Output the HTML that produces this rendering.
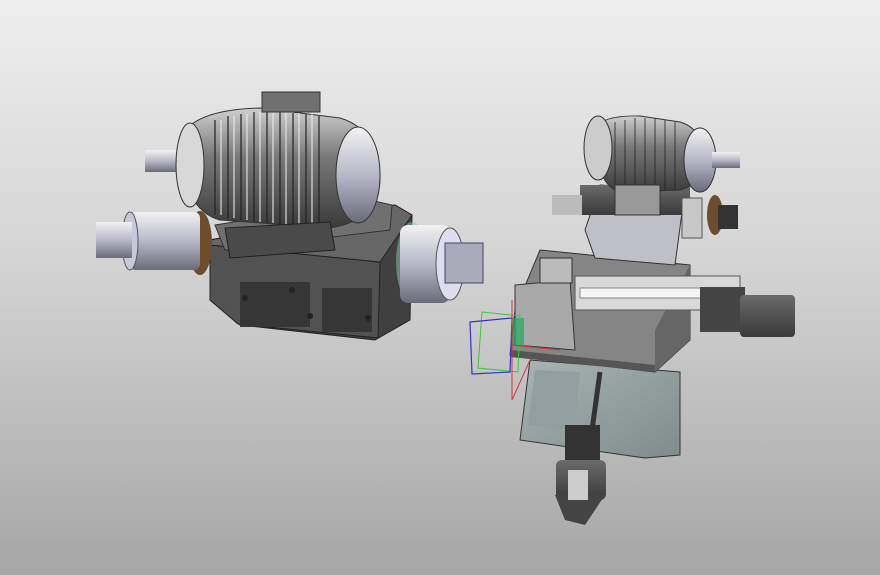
<!DOCTYPE html>
<html><head><meta charset="utf-8"><style>
html,body{margin:0;padding:0;width:880px;height:575px;overflow:hidden}
body{background:linear-gradient(#eeeeee 0%,#d4d4d4 45%,#a6a6a6 100%)}
svg{position:absolute;left:0;top:0}
</style></head><body>
<svg width="880" height="575" viewBox="0 0 880 575">
<defs>
<linearGradient id="mg" x1="0" y1="0" x2="0" y2="1"><stop offset="0" stop-color="#cfcfcf"/><stop offset=".4" stop-color="#7a7a7a"/><stop offset="1" stop-color="#3a3a3a"/></linearGradient>
<linearGradient id="cyl" x1="0" y1="0" x2="0" y2="1"><stop offset="0" stop-color="#f2f2f2"/><stop offset=".5" stop-color="#b8b8c8"/><stop offset="1" stop-color="#6a6a78"/></linearGradient>
<linearGradient id="dk" x1="0" y1="0" x2="0" y2="1"><stop offset="0" stop-color="#6a6a6a"/><stop offset="1" stop-color="#3a3a3a"/></linearGradient>
<linearGradient id="tb" x1="0" y1="0" x2="1" y2="1"><stop offset="0" stop-color="#a9b4b4"/><stop offset="1" stop-color="#7f8c8c"/></linearGradient>
</defs>
<!-- LEFT ASSEMBLY -->
<polygon points="210,240 395,205 412,215 410,320 375,340 240,325 210,300" fill="#404040" stroke="#222"/>
<polygon points="210,245 380,262 378,338 238,324 210,300" fill="#525252" stroke="#222"/>
<polygon points="210,240 395,205 412,215 380,262 210,245" fill="#666" stroke="#222"/>
<rect x="240" y="282" width="70" height="45" fill="#363636"/>
<rect x="322" y="288" width="50" height="44" fill="#363636"/>
<g fill="#222"><circle cx="245" cy="298" r="3"/><circle cx="292" cy="290" r="3"/><circle cx="310" cy="316" r="3"/><circle cx="368" cy="318" r="3"/></g>
<polygon points="215,225 370,200 392,205 390,230 225,250" fill="#707070" stroke="#333"/>
<ellipse cx="200" cy="243" rx="12" ry="32" fill="#6e4c2e"/>
<rect x="130" y="212" width="70" height="58" fill="url(#cyl)" rx="6"/>
<ellipse cx="130" cy="241" rx="8" ry="29" fill="#c8c8d8" stroke="#555"/>
<rect x="96" y="222" width="36" height="36" fill="url(#cyl)"/>
<rect x="145" y="150" width="45" height="22" fill="url(#cyl)"/>
<path d="M180,140 Q190,110 260,108 L340,118 Q380,130 380,180 Q378,220 330,228 L220,220 Q182,210 180,140Z" fill="url(#mg)" stroke="#333"/>
<g stroke="#222" stroke-width="1.5" opacity=".8">
<path d="M215,120 L215,215 M228,116 L228,218 M241,114 L241,220 M254,112 L254,222 M267,112 L267,223 M280,112 L280,224 M293,113 L293,225 M306,114 L306,226 M319,116 L319,226"/>
</g>
<g stroke="#eee" stroke-width="1.5" opacity=".7">
<path d="M221,120 L221,215 M234,116 L234,218 M247,114 L247,220 M260,112 L260,222 M273,112 L273,223 M286,112 L286,224 M299,113 L299,225 M312,114 L312,226"/>
</g>
<ellipse cx="190" cy="165" rx="14" ry="42" fill="#d8d8d8" stroke="#333"/>
<ellipse cx="358" cy="175" rx="22" ry="48" fill="url(#cyl)" stroke="#333"/>
<rect x="262" y="92" width="58" height="20" fill="#707070" stroke="#333"/>
<polygon points="225,228 330,222 335,250 230,258" fill="#4a4a4a" stroke="#222"/>
<ellipse cx="412" cy="262" rx="16" ry="40" fill="#8ca" opacity=".5"/>
<rect x="400" y="225" width="50" height="78" fill="url(#cyl)" rx="8"/>
<ellipse cx="450" cy="264" rx="14" ry="36" fill="#dde" stroke="#555"/>
<rect x="445" y="243" width="38" height="40" fill="#aab" stroke="#446"/>
<!-- RIGHT ASSEMBLY -->
<polygon points="520,440 530,360 680,372 680,455 645,458" fill="url(#tb)" stroke="#333"/>
<polygon points="535,370 580,372 575,430 528,425" fill="#90a0a0"/>
<line x1="600" y1="372" x2="590" y2="445" stroke="#333" stroke-width="5"/>
<polygon points="540,250 690,265 690,340 655,372 510,355 515,310" fill="#858585" stroke="#333"/>
<polygon points="510,350 655,365 655,372 510,357" fill="#555"/>
<polygon points="655,330 690,265 690,340 655,372" fill="#666"/>
<rect x="565" y="425" width="35" height="45" fill="#333"/>
<rect x="556" y="460" width="50" height="40" fill="url(#dk)" rx="6"/>
<path d="M555,495 L605,495 L585,525 L565,520Z" fill="#444"/>
<rect x="568" y="470" width="20" height="30" fill="#ccc"/>
<rect x="575" y="276" width="165" height="34" fill="#d8d8d8" stroke="#555"/>
<rect x="580" y="288" width="155" height="10" fill="#f5f5f5" stroke="#888"/>
<rect x="700" y="287" width="45" height="45" fill="#444"/>
<rect x="740" y="295" width="55" height="42" fill="url(#dk)" rx="4"/>
<polygon points="515,285 570,280 575,350 515,345" fill="#a9a9a9" stroke="#333"/>
<rect x="540" y="258" width="32" height="25" fill="#bbb" stroke="#333"/>
<rect x="512" y="318" width="12" height="28" fill="#2a6" opacity=".7"/>
<polygon points="585,230 600,185 685,190 675,265 595,258" fill="#bfbfc8" stroke="#333"/>
<rect x="580" y="185" width="110" height="30" fill="url(#dk)"/>
<rect x="682" y="198" width="20" height="40" fill="#c8c8c8" stroke="#555"/>
<ellipse cx="715" cy="215" rx="8" ry="20" fill="#6e4c2e"/>
<rect x="718" y="205" width="20" height="24" fill="#333"/>
<rect x="552" y="195" width="30" height="20" fill="#bbb"/>
<path d="M595,130 Q600,115 640,116 L680,122 Q705,130 705,160 Q702,185 680,190 L620,192 Q595,185 595,130Z" fill="url(#mg)" stroke="#333"/>
<g stroke="#222" opacity=".8"><path d="M615,122 L615,190 M625,120 L625,192 M635,118 L635,192 M645,118 L645,192 M655,118 L655,192 M665,120 L665,190 M675,122 L675,190"/></g>
<ellipse cx="598" cy="148" rx="14" ry="32" fill="#ccc" stroke="#333"/>
<ellipse cx="700" cy="160" rx="16" ry="32" fill="url(#cyl)" stroke="#333"/>
<rect x="712" y="152" width="28" height="16" fill="url(#cyl)"/>
<rect x="615" y="185" width="45" height="30" fill="#999" stroke="#333"/>
<!-- axes -->
<polygon points="482,312 520,316 518,372 478,368" fill="none" stroke="#3c3" stroke-width="1"/>
<polygon points="470,322 512,318 510,372 472,374" fill="none" stroke="#33c" stroke-width="1.2"/>
<line x1="512" y1="300" x2="512" y2="400" stroke="#d33" stroke-width="1"/>
<line x1="512" y1="345" x2="560" y2="350" stroke="#d33" stroke-width="1"/>
<line x1="512" y1="400" x2="530" y2="360" stroke="#d33" stroke-width="1"/>
</svg>
</body></html>
